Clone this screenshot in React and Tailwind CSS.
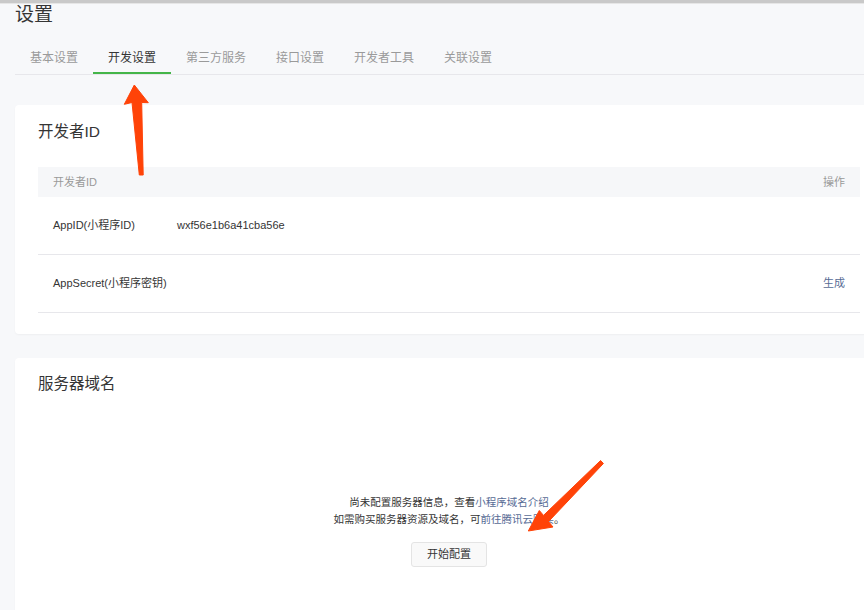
const TABS = ['基本设置', '开发设置', '第三方服务', '接口设置', '开发者工具', '关联设置']

function Arrows() {
  return (
    <svg className="absolute left-0 top-0 pointer-events-none" width="864" height="610" viewBox="0 0 864 610">
      <g fill="#ff4308" stroke="#ff4308" strokeWidth="1" strokeLinejoin="round">
        <polygon points="134.3,85 124.3,104.3 132,102.5 139.3,175 143.2,175 141.7,102.5 148.3,102.7" />
        <polygon points="528.3,531 539.3,510.5 543.5,515.4 600.6,460.5 603.4,463.5 548.5,521.6 553,527" />
      </g>
    </svg>
  )
}

function Tabs() {
  return (
    <div className="flex border-b border-[#e7e7eb] ml-[15px]">
      {TABS.map((t, i) => (
        <div
          key={t}
          className={
            i === 1
              ? 'h-[32px] pt-[3px] leading-[26px] px-[15px] text-[12px] text-[#353535] border-b-2 border-[#44b549] -mb-px'
              : 'h-[32px] pt-[3px] leading-[26px] px-[15px] text-[12px] text-[#9a9a9a]'
          }
        >
          {t}
        </div>
      ))}
    </div>
  )
}

function DevIdCard() {
  return (
    <div className="w-[868px] ml-[15px] mt-[30px] bg-white rounded-[4px] shadow-[0_1px_2px_rgba(0,0,0,0.04)] pt-[15px] px-[23px] pb-[21px]">
      <h2 className="text-[15.5px] leading-[24px] text-[#353535]">开发者ID</h2>
      <div className="mt-[23px]">
        <div className="h-[30px] bg-[#f6f7f9] flex items-center justify-between px-[15px] text-[11px] text-[#9a9a9a]">
          <span>开发者ID</span>
          <span>操作</span>
        </div>
        <div className="h-[58px] border-b border-[#e7e7eb] flex items-center px-[15px] text-[11px] text-[#353535]">
          <span className="w-[124px]">AppID(小程序ID)</span>
          <span>wxf56e1b6a41cba56e</span>
        </div>
        <div className="h-[58px] border-b border-[#e7e7eb] flex items-center justify-between px-[15px] text-[11px] text-[#353535]">
          <span>AppSecret(小程序密钥)</span>
          <span className="text-[#576b95]">生成</span>
        </div>
      </div>
    </div>
  )
}

function ServerCard() {
  return (
    <div className="w-[868px] ml-[15px] mt-[24px] bg-white rounded-[4px] shadow-[0_1px_2px_rgba(0,0,0,0.04)] pt-[14px] px-[23px] pb-[60px]">
      <h2 className="text-[15.5px] leading-[24px] text-[#353535]">服务器域名</h2>
      <div className="mt-[98px] flex flex-col items-center text-[10.5px] leading-[17px] text-[#353535]">
        <p>
          尚未配置服务器信息，查看<span className="text-[#576b95]">小程序域名介绍</span>
        </p>
        <p>
          如需购买服务器资源及域名，可<span className="text-[#576b95]">前往腾讯云购买</span>。
        </p>
        <button className="mt-[14px] h-[25px] w-[76px] border border-[#e4e4e4] bg-[#f9f9f9] rounded-[3px] text-[11px] text-[#353535]">
          开始配置
        </button>
      </div>
    </div>
  )
}

export default function App() {
  return (
    <div className="relative w-[864px] h-[610px] overflow-hidden bg-[#f7f8fa] font-['Liberation_Sans','Noto_Sans_CJK_SC',sans-serif]">
      <div className="h-[3px] bg-[#c9c9c9]" />
      <div className="h-px bg-[#e6e6e6]" />
      <h1 className="ml-[15px] text-[19px] leading-[22px] text-[#353535]">设置</h1>
      <div className="mt-[16px]">
        <Tabs />
      </div>
      <DevIdCard />
      <ServerCard />
      <Arrows />
    </div>
  )
}
